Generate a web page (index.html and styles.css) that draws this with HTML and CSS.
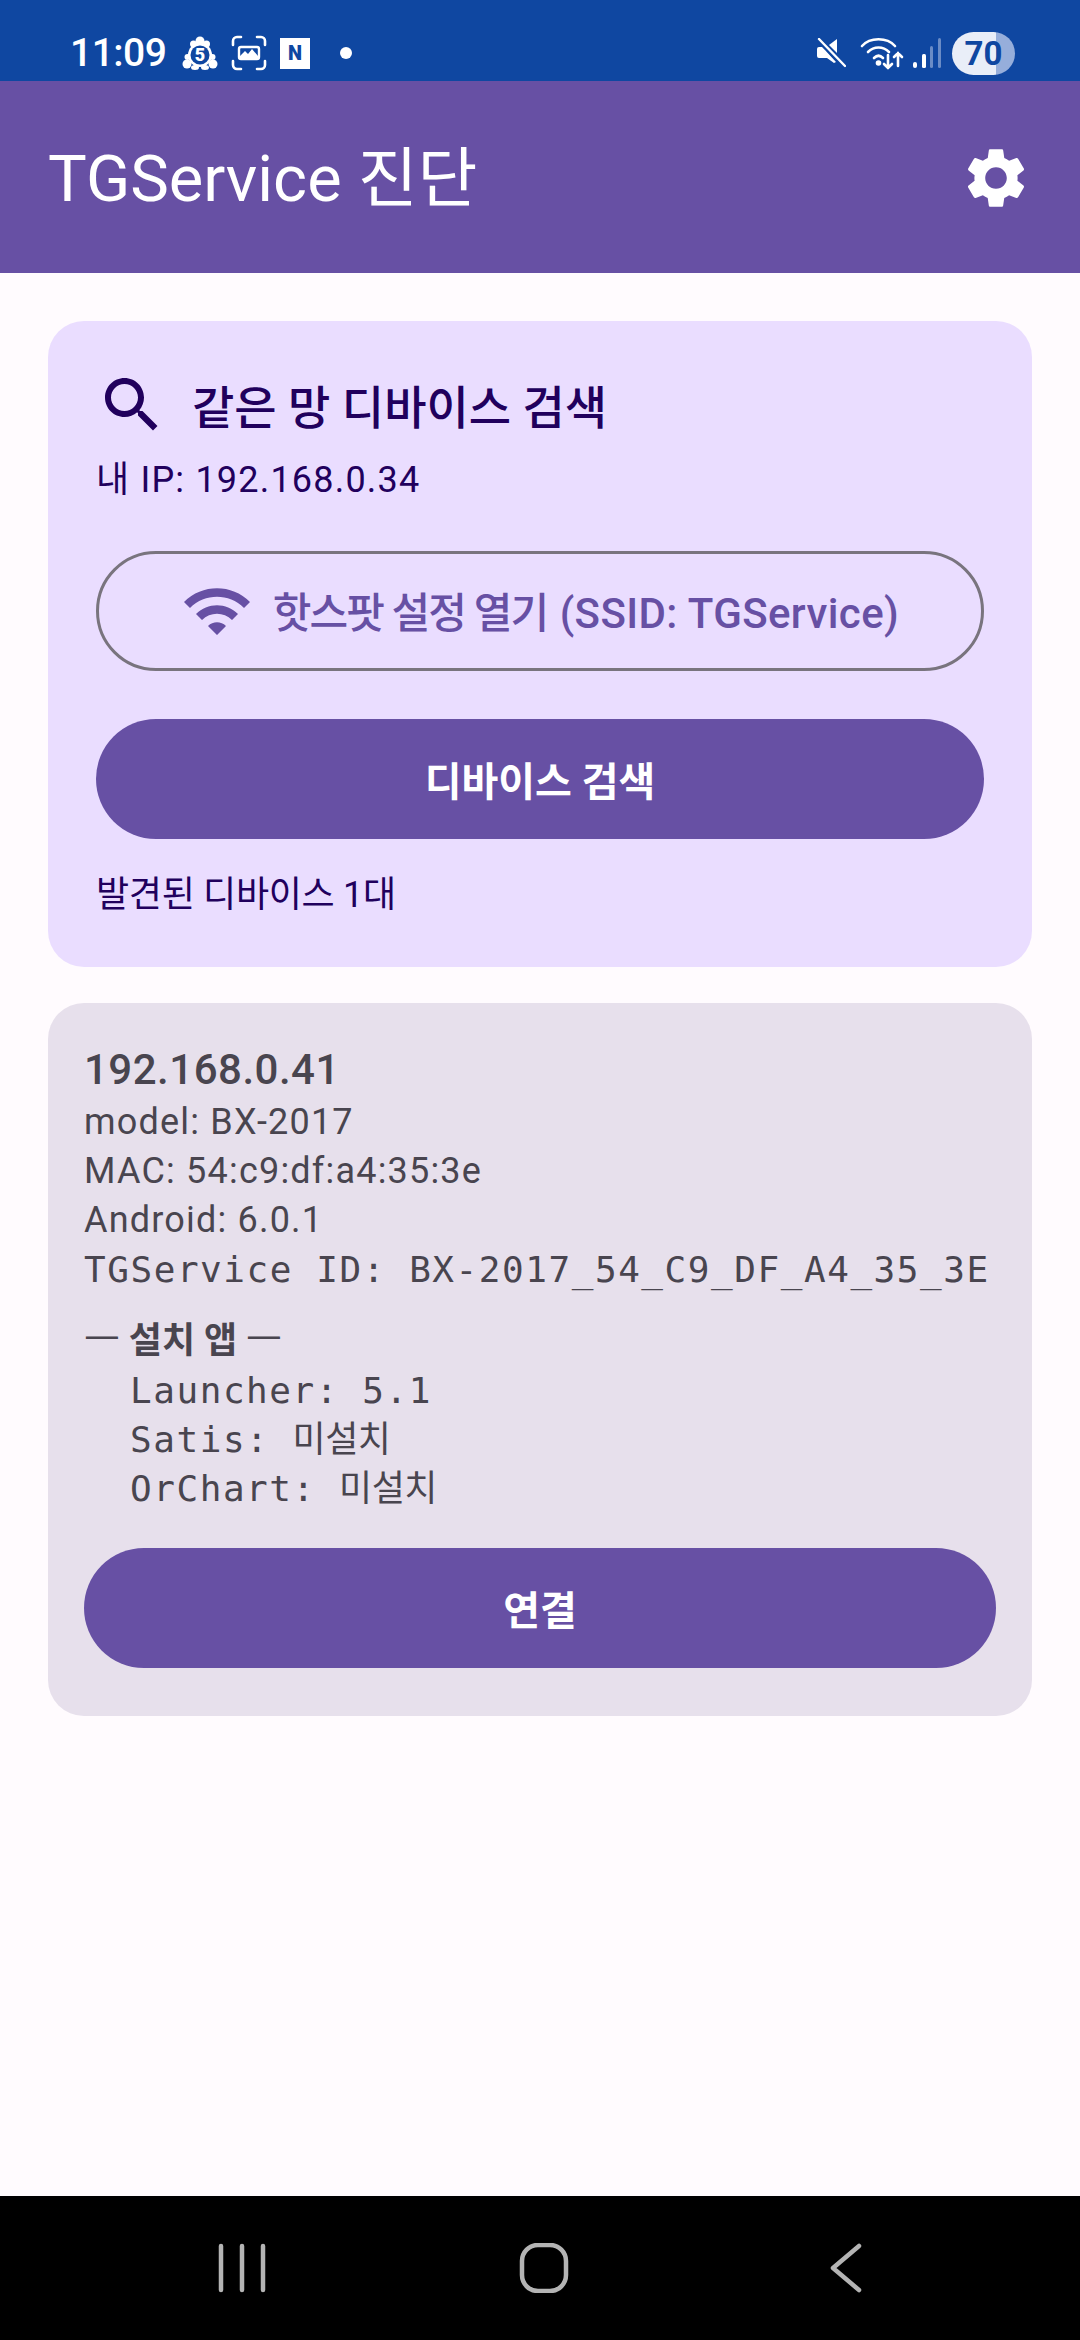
FILE: index.html
```html
<!DOCTYPE html>
<html lang="ko">
<head>
    <meta charset="UTF-8">
    <meta name="viewport" content="width=device-width, initial-scale=1.0">
    <title>TGService 진단</title>
    <link rel="stylesheet" href="styles.css">
</head>
<body>

<div class="status-bar">
    <div class="status-left">
        <span class="clock">11:09</span>
        <svg class="icon-money" viewBox="0 0 36 36">
            <g fill="#fff">
                <circle cx="18" cy="6" r="4.5"/>
                <circle cx="11.5" cy="9" r="3.5"/>
                <circle cx="24.5" cy="9" r="3.5"/>
                <circle cx="5" cy="29" r="4.5"/>
                <circle cx="31" cy="29" r="4.5"/>
                <circle cx="5.5" cy="22" r="3"/>
                <circle cx="30.5" cy="22" r="3"/>
                <ellipse cx="13" cy="32.5" rx="4" ry="2.5"/>
                <ellipse cx="23" cy="32.5" rx="4" ry="2.5"/>
                <circle cx="18" cy="20" r="12"/>
            </g>
            <circle cx="18" cy="20" r="9.5" fill="#0f47a1"/>
            <text x="18" y="26" text-anchor="middle" class="money-digit">5</text>
        </svg>
        <svg class="icon-capture" viewBox="0 0 36 36">
            <path d="M2 10V6a4 4 0 0 1 4-4h4M26 2h4a4 4 0 0 1 4 4v4M34 26v4a4 4 0 0 1-4 4h-4M10 34H6a4 4 0 0 1-4-4v-4" fill="none" stroke="#fff" stroke-width="2.6" stroke-linecap="round"/>
            <path d="M10 12h16a2 2 0 0 1 2 2v8a2 2 0 0 1-2 2H10a2 2 0 0 1-2-2v-8a2 2 0 0 1 2-2z" fill="none" stroke="#fff" stroke-width="2.4"/>
            <path d="M9 21l5-5 3 3 4-5 6 7v2H9z" fill="#fff"/>
        </svg>
        <div class="icon-naver"><span>N</span></div>
        <span class="status-dot"></span>
    </div>
    <div class="status-right">
        <svg class="icon-mute" viewBox="0 0 30 30">
            <path d="M1 11a2 2 0 0 1 2-2h3l3 3 11 12-2 1-7-5H3a2 2 0 0 1-2-2z" fill="#fff"/>
            <path d="M21 1v14l-8-8z" fill="#fff"/>
            <path d="M3 2l25 26" stroke="#0f47a1" stroke-width="4.5"/>
            <path d="M3 1l26 27" stroke="#fff" stroke-width="2.4" stroke-linecap="round"/>
        </svg>
        <svg class="icon-wifi-small" viewBox="0 0 44 34">
            <g fill="none" stroke="#fff" stroke-width="2.6" stroke-linecap="round">
                <path d="M2 10C10 1 27 1 35 10"/>
                <path d="M8 16c6-6 15-6 21 0"/>
                <path d="M14 22c3-3 6-3 9 0"/>
                <path d="M28 19v13M24 28l4 4 4-4"/>
                <path d="M38 30V17M34 21l4-4 4 4"/>
            </g>
            <circle cx="18.500" cy="27" r="2.800" fill="#fff"/>
        </svg>
        <svg class="icon-signal" viewBox="0 0 28 30">
            <rect x="0" y="24" width="4" height="6" rx="2" fill="#fff"/>
            <rect x="9" y="16" width="4" height="14" rx="1.500" fill="#fff"/>
            <rect x="17" y="8" width="3" height="22" rx="1.500" fill="#6a8cc6"/>
            <rect x="25" y="0" width="3" height="30" rx="1.500" fill="#6a8cc6"/>
        </svg>
        <div class="battery">70</div>
    </div>
</div>

<div class="app-bar">
    <h1 class="app-title">TGService 진단</h1>
    <svg class="icon-gear" viewBox="0 0 24 24">
        <path d="M19.14,12.94c0.04-0.3,0.06-0.61,0.06-0.94c0-0.32-0.02-0.64-0.07-0.94l2.03-1.58c0.18-0.14,0.23-0.41,0.12-0.61 l-1.92-3.32c-0.12-0.22-0.37-0.29-0.59-0.22l-2.39,0.96c-0.5-0.38-1.03-0.7-1.62-0.94L14.4,2.81c-0.04-0.24-0.24-0.41-0.48-0.41 h-3.84c-0.24,0-0.43,0.17-0.47,0.41L9.25,5.35C8.66,5.59,8.12,5.92,7.63,6.29L5.24,5.33c-0.22-0.08-0.47,0-0.59,0.22L2.74,8.87 C2.62,9.08,2.66,9.34,2.86,9.48l2.03,1.58C4.84,11.36,4.8,11.69,4.8,12s0.02,0.64,0.07,0.94l-2.03,1.58 c-0.18,0.14-0.23,0.41-0.12,0.61l1.92,3.32c0.12,0.22,0.37,0.29,0.59,0.22l2.39-0.96c0.5,0.38,1.03,0.7,1.62,0.94l0.36,2.54 c0.05,0.24,0.24,0.41,0.48,0.41h3.84c0.24,0,0.44-0.17,0.47-0.41l0.36-2.54c0.59-0.24,1.13-0.56,1.62-0.94l2.39,0.96 c0.22,0.08,0.47,0,0.59-0.22l1.92-3.32c0.12-0.22,0.07-0.47-0.12-0.61L19.14,12.94z M12,15.6c-1.98,0-3.6-1.62-3.6-3.6 s1.62-3.6,3.6-3.6s3.6,1.62,3.6,3.6S13.98,15.6,12,15.6z"/>
    </svg>
</div>

<div class="content">
    <div class="card card-search">
        <div class="search-header">
            <svg class="icon-search" viewBox="0 0 24 24">
                <path d="M15.5 14h-.79l-.28-.27C15.41 12.59 16 11.11 16 9.5 16 5.91 13.09 3 9.5 3S3 5.91 3 9.5 5.91 16 9.5 16c1.61 0 3.09-.59 4.23-1.57l.27.28v.79l5 4.99L20.49 19l-4.99-5zm-6 0C7.01 14 5 11.99 5 9.5S7.01 5 9.5 5 14 7.01 14 9.5 11.99 14 9.5 14z"/>
            </svg>
            <h2 class="search-title">같은 망 디바이스 검색</h2>
        </div>
        <p class="my-ip">내 IP: 192.168.0.34</p>
        <div class="btn btn-outline">
            <svg class="icon-wifi" viewBox="0 0 24 24">
                <path d="M1 9l2 2c4.97-4.97 13.03-4.97 18 0l2-2C16.93 2.93 7.08 2.93 1 9zm8 8l3 3 3-3c-1.65-1.66-4.34-1.66-6 0zm-4-4l2 2c2.76-2.76 7.24-2.76 10 0l2-2C15.14 9.14 8.87 9.14 5 13z"/>
            </svg>
            <span><span class="ko-tight">핫스팟 설정 열기 </span><span class="latin-wide">(SSID: TGService)</span></span>
        </div>
        <div class="btn btn-filled btn-scan">디바이스 검색</div>
        <p class="found-count">발견된 디바이스 1대</p>
    </div>

    <div class="card card-device">
        <div class="device-ip">192.168.0.41</div>
        <div class="device-line">model: BX-2017</div>
        <div class="device-line">MAC: 54:c9:df:a4:35:3e</div>
        <div class="device-line">Android: 6.0.1</div>
        <div class="device-line mono">TGService ID: BX-2017_54_C9_DF_A4_35_3E</div>
        <div class="device-section"><span class="dash">—</span> 설치 앱 <span class="dash">—</span></div>
        <div class="device-line mono app-line">Launcher: 5.1</div>
        <div class="device-line mono app-line">Satis: <span class="mono-ko">미설치</span></div>
        <div class="device-line mono app-line">OrChart: <span class="mono-ko">미설치</span></div>
        <div class="btn btn-filled btn-connect">연결</div>
    </div>
</div>

<div class="nav-bar">
    <svg class="nav-icon" viewBox="0 0 50 50">
        <path d="M4 3v44M25 3v44M46 3v44" fill="none" stroke="#b4b4b4" stroke-width="4.500" stroke-linecap="round"/>
    </svg>
    <svg class="nav-icon" viewBox="0 0 50 50">
        <rect x="3" y="2" width="44" height="46" rx="16" fill="none" stroke="#b4b4b4" stroke-width="4.500"/>
    </svg>
    <svg class="nav-icon" viewBox="0 0 50 50">
        <path d="M38 3L12 25l26 22" fill="none" stroke="#b4b4b4" stroke-width="4.500" stroke-linecap="round" stroke-linejoin="round"/>
    </svg>
</div>

</body>
</html>
```

FILE: styles.css
```css
body {
    margin: 0;
    height: 2340px;
    background-color: #fffbfe;
    display: flex;
    flex-direction: column;
    font-family: Roboto, "Noto Sans CJK KR", sans-serif;
}
h1, h2, p {
    margin: 0;
    font-weight: normal;
}

/* status bar */
.status-bar {
    height: 81px;
    box-sizing: border-box;
    background-color: #0f47a1;
    display: flex;
    justify-content: space-between;
    align-items: center;
    padding: 25px 65px 0 70px;
    color: white;
}
.status-left, .status-right {
    display: flex;
    align-items: center;
}
.clock {
    font-size: 39px;
    font-weight: 500;
    letter-spacing: -0.5px;
    width: 112px;
}
.icon-money {
    width: 36px;
    height: 36px;
}
.money-digit {
    font-size: 18px;
    font-weight: 900;
    fill: white;
}
.icon-capture {
    width: 36px;
    height: 36px;
    margin-left: 13px;
}
.icon-naver {
    width: 30px;
    height: 31px;
    margin-left: 13px;
    background-color: white;
    color: #0f47a1;
    font-size: 20px;
    font-weight: 900;
    display: flex;
    align-items: center;
    justify-content: center;
}
.status-dot {
    width: 12px;
    height: 12px;
    margin-left: 30px;
    border-radius: 50%;
    background-color: white;
}
.icon-mute {
    width: 30px;
    height: 30px;
}
.icon-wifi-small {
    width: 44px;
    height: 34px;
    margin-left: 14px;
}
.icon-signal {
    width: 28px;
    height: 30px;
    margin-left: 9px;
}
.battery {
    width: 63px;
    height: 43px;
    margin-left: 11px;
    border-radius: 22px;
    background: linear-gradient(to right, #e9eef8 44px, #96aedb 44px);
    color: #0f47a1;
    font-size: 33px;
    font-weight: 700;
    line-height: 43px;
    text-align: center;
}

/* app bar */
.app-bar {
    height: 192px;
    background-color: #6750a4;
    display: flex;
    justify-content: space-between;
    align-items: center;
    padding: 0 48px;
}
.app-title {
    font-size: 65px;
    color: white;
    margin-top: -8px;
}
.icon-gear {
    width: 72px;
    height: 72px;
    fill: white;
    margin-top: 2px;
}

/* cards */
.content {
    flex: 1;
    padding: 48px 48px 0;
    display: flex;
    flex-direction: column;
    gap: 36px;
}
.card {
    border-radius: 36px;
}
.card-search {
    background-color: #eaddff;
    color: #21005d;
    padding: 48px;
    height: 646px;
    box-sizing: border-box;
}
.search-header {
    display: flex;
    align-items: center;
    height: 72px;
}
.icon-search {
    width: 72px;
    height: 72px;
    fill: #21005d;
    flex: none;
}
.search-title {
    font-size: 46px;
    font-weight: 500;
    margin-left: 24px;
    margin-top: -2px;
}
.my-ip {
    font-size: 36px;
    line-height: 48px;
    letter-spacing: 1.2px;
    margin-top: 15px;
}
.found-count {
    font-size: 36px;
    line-height: 48px;
    letter-spacing: -0.3px;
    margin-top: 32px;
}
.btn {
    display: flex;
    align-items: center;
    justify-content: center;
    box-sizing: border-box;
    border-radius: 60px;
    font-size: 40px;
    font-weight: 600;
}
.btn-outline {
    height: 120px;
    margin-top: 47px;
    border: 3px solid #79747e;
    color: #6750a4;
    font-size: 42px;
    font-weight: 500;
    gap: 20px;
    padding-bottom: 4px;
}
.ko-tight {
    letter-spacing: -1.9px;
}
.latin-wide {
    letter-spacing: 0.4px;
    margin-left: 4px;
}
.icon-wifi {
    width: 72px;
    height: 72px;
    fill: #6750a4;
    margin-top: 4px;
}
.btn-filled {
    height: 120px;
    background-color: #6750a4;
    color: white;
}
.btn-scan {
    margin-top: 48px;
}
.card-device {
    background-color: #e7e0ec;
    color: #49454f;
    padding: 39px 36px 48px;
}
.device-ip {
    font-size: 42px;
    font-weight: 500;
    letter-spacing: 0.5px;
    line-height: 56px;
}
.device-line {
    font-size: 36px;
    line-height: 49px;
    letter-spacing: 1.2px;
}
.mono {
    font-family: "DejaVu Sans Mono", "Noto Sans CJK KR", monospace;
    letter-spacing: 1.55px;
}
.mono-ko {
    letter-spacing: -0.5px;
}
.device-section {
    font-size: 36px;
    font-weight: 600;
    line-height: 49px;
    margin-top: 18px;
}
.dash {
    font-family: "Noto Sans CJK KR", sans-serif;
    font-size: 40px;
    font-weight: normal;
}
.app-line {
    padding-left: 46px;
}
.btn-connect {
    margin-top: 35px;
}

/* navigation bar */
.nav-bar {
    height: 144px;
    background-color: black;
    display: grid;
    grid-template-columns: repeat(3, 302px);
    justify-items: center;
    align-items: center;
    padding-left: 91px;
}
.nav-icon {
    width: 50px;
    height: 50px;
}
```
